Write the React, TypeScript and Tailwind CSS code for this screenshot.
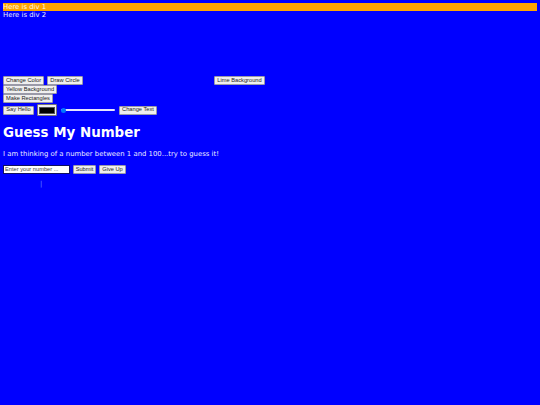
import React from "react";

const btn =
  "h-[9px] shrink-0 bg-[#efefef] border border-[#9a9aa8] rounded-[1px] text-[#222] text-[5.7px] leading-none font-['Liberation_Sans',Arial,sans-serif] flex items-center justify-center whitespace-nowrap";

export default function App() {
  return (
    <div className="min-h-[405px] w-full bg-[#0000ff] p-[3px] text-white text-[6.9px] leading-[8px] font-['DejaVu_Sans',sans-serif]">
      <div className="h-[8px] bg-[#ffa500] text-[#fff8e8]">Here is div 1</div>
      <div className="h-[8px] text-[#e8e8ff]">Here is div 2</div>

      <div className="flex items-end">
        <div className="flex gap-[3px]">
          <button className={`${btn} w-[41px]`}>Change Color</button>
          <button className={`${btn} w-[36px]`}>Draw Circle</button>
        </div>
        <div className="w-[131px] h-[66px] shrink-0" />
        <button className={`${btn} w-[51px]`}>Lime Background</button>
      </div>

      <div className="flex">
        <button className={`${btn} w-[54px]`}>Yellow Background</button>
      </div>
      <div className="flex">
        <button className={`${btn} w-[50px]`}>Make Rectangles</button>
      </div>

      <div className="mt-[1px] flex items-center h-[12px]">
        <button className={`${btn} w-[31px]`}>Say Hello</button>
        <div className="ml-[3px] w-[20px] h-[12px] bg-[#efefef] border border-[#767676] rounded-[1px] flex items-center justify-center">
          <div className="w-[16px] h-[7px] bg-black border border-[#555]" />
        </div>
        <div className="ml-[4px] w-[54px] h-[6px] relative flex items-center">
          <div className="w-full h-[2px] rounded-full bg-[#e6e6ff]" />
          <div className="absolute left-0 top-[0.5px] w-[5px] h-[5px] rounded-full bg-[#0075ff]" />
        </div>
        <button className={`${btn} ml-[4px] w-[38px]`}>Change Text</button>
      </div>

      <h1 className="mt-[9px] text-[13.4px] leading-[16px] font-bold">Guess My Number</h1>
      <p className="mt-[9px] leading-[8px] text-[#ececff]">
        I am thinking of a number between 1 and 100...try to guess it!
      </p>

      <div className="mt-[7px] flex items-center gap-[3px]">
        <div className="w-[67px] h-[9px] bg-white border border-[#101060] flex items-center px-[1px] text-[5.7px] leading-none text-[#444] font-['Liberation_Sans',Arial,sans-serif] whitespace-nowrap overflow-hidden">
          Enter your number ...
        </div>
        <button className={`${btn} w-[23px]`}>Submit</button>
        <button className={`${btn} w-[27px]`}>Give Up</button>
      </div>

      <div className="mt-[6px] ml-[37px] text-[#5f8fff] leading-[8px]">|</div>
    </div>
  );
}
